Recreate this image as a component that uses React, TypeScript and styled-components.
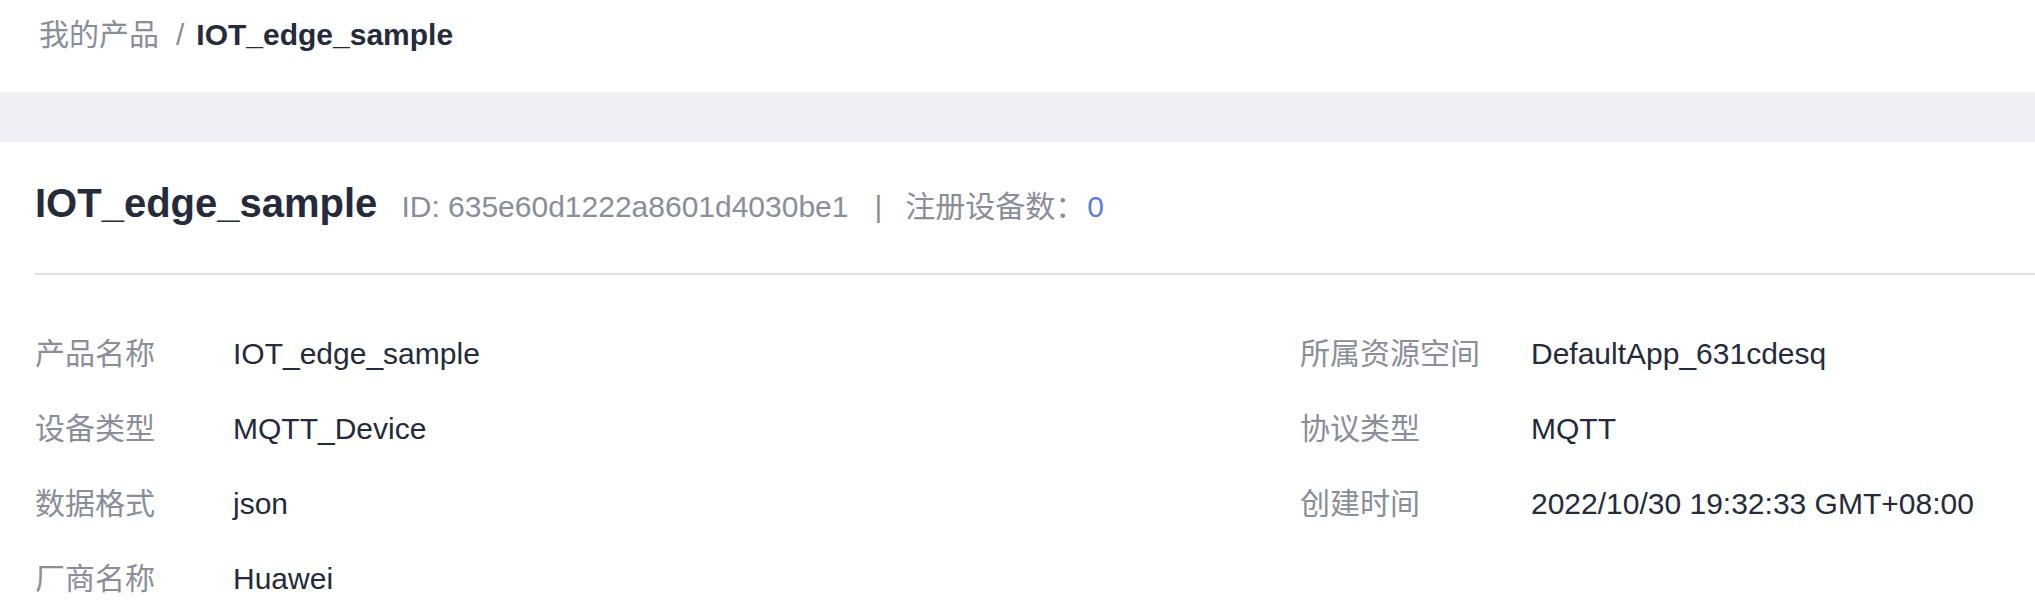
import React from "react";
import styled, { createGlobalStyle } from "styled-components";

const GlobalStyle = createGlobalStyle`
  html, body {
    margin: 0;
    padding: 0;
    background: #ffffff;
    overflow: hidden;
  }
  body {
    font-family: "Liberation Sans", Arial, "Noto Sans CJK SC", sans-serif;
    color: #252b3a;
  }
`;

const Page = styled.div`
  display: flex;
  flex-direction: column;
  width: 100%;
`;

const Breadcrumb = styled.nav`
  display: flex;
  align-items: baseline;
  height: 92px;
  box-sizing: border-box;
  padding: 20px 0 0 39px;
  font-size: 30px;
  line-height: 30px;
`;

const Crumb = styled.span<{ $current?: boolean }>`
  color: ${(p) => (p.$current ? "#252b3a" : "#8a8e99")};
  font-weight: ${(p) => (p.$current ? 700 : 400)};
`;

const CrumbSep = styled.span`
  color: #8a8e99;
  margin: 0 12px 0 17px;
`;

const Band = styled.div`
  height: 50px;
  background: #eef0f5;
`;

const Card = styled.section`
  display: flex;
  flex-direction: column;
  padding-left: 35px;
  background: #ffffff;
`;

const Header = styled.header`
  display: flex;
  align-items: baseline;
  padding: 33px 0 38px;
  border-bottom: 2px solid #dfe1e6;
`;

const Title = styled.h1`
  margin: 0;
  font-size: 40px;
  line-height: 56px;
  font-weight: 700;
  color: #252b3a;
`;

const Meta = styled.div`
  display: flex;
  align-items: baseline;
  margin-left: 24px;
  font-size: 30px;
  line-height: 56px;
  color: #8a8e99;
`;

const MetaSep = styled.span`
  margin: 0 23px 0 26px;
  color: #8a8e99;
`;

const Count = styled.span`
  margin-left: 2px;
  color: #5e7ce0;
`;

const InfoGrid = styled.div`
  display: grid;
  grid-template-columns: 1265px 1fr;
  padding-top: 41px;
`;

const Column = styled.div`
  display: flex;
  flex-direction: column;
`;

const Row = styled.div<{ $labelWidth: number }>`
  display: grid;
  grid-template-columns: ${(p) => p.$labelWidth}px 1fr;
  height: 75px;
  font-size: 30px;
  line-height: 75px;
  white-space: nowrap;
`;

const Label = styled.span`
  color: #8a8e99;
`;

const Value = styled.span`
  color: #252b3a;
`;

type Item = { label: string; value: string };

const leftItems: Item[] = [
  { label: "产品名称", value: "IOT_edge_sample" },
  { label: "设备类型", value: "MQTT_Device" },
  { label: "数据格式", value: "json" },
  { label: "厂商名称", value: "Huawei" },
];

const rightItems: Item[] = [
  { label: "所属资源空间", value: "DefaultApp_631cdesq" },
  { label: "协议类型", value: "MQTT" },
  { label: "创建时间", value: "2022/10/30 19:32:33 GMT+08:00" },
];

export default function App() {
  return (
    <Page>
      <GlobalStyle />
      <Breadcrumb>
        <Crumb>我的产品</Crumb>
        <CrumbSep>/</CrumbSep>
        <Crumb $current>IOT_edge_sample</Crumb>
      </Breadcrumb>
      <Band />
      <Card>
        <Header>
          <Title>IOT_edge_sample</Title>
          <Meta>
            <span>ID: 635e60d1222a8601d4030be1</span>
            <MetaSep>|</MetaSep>
            <span>注册设备数：</span>
            <Count>0</Count>
          </Meta>
        </Header>
        <InfoGrid>
          <Column>
            {leftItems.map((it) => (
              <Row key={it.label} $labelWidth={198}>
                <Label>{it.label}</Label>
                <Value>{it.value}</Value>
              </Row>
            ))}
          </Column>
          <Column>
            {rightItems.map((it) => (
              <Row key={it.label} $labelWidth={231}>
                <Label>{it.label}</Label>
                <Value>{it.value}</Value>
              </Row>
            ))}
          </Column>
        </InfoGrid>
      </Card>
    </Page>
  );
}
